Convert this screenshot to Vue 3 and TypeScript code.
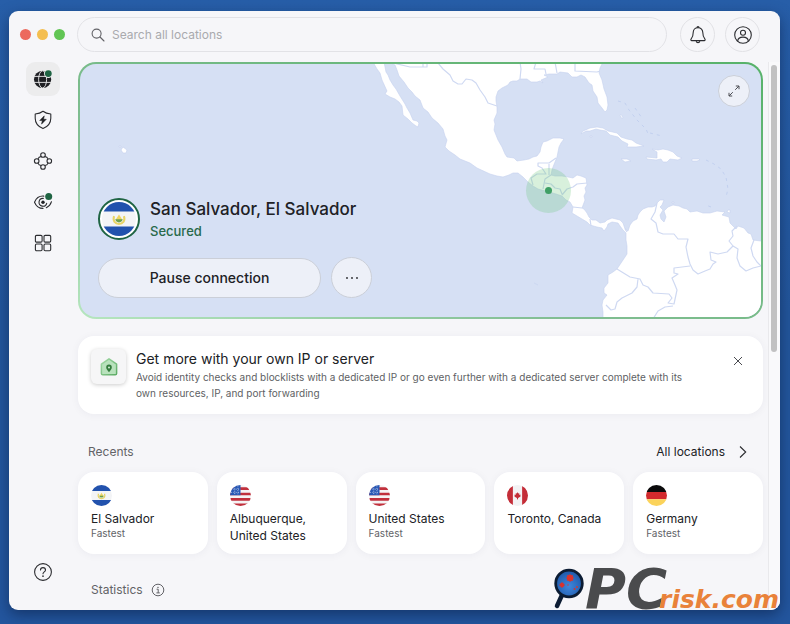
<script setup lang="ts">
import { ref } from 'vue'

type FlagCode = 'sv' | 'us' | 'ca' | 'de'

interface RecentLocation {
  flag: FlagCode
  name: string
  detail?: string
}

const query = ref('')
const promoVisible = ref(true)

const recents: RecentLocation[] = [
  { flag: 'sv', name: 'El Salvador', detail: 'Fastest' },
  { flag: 'us', name: 'Albuquerque, United States' },
  { flag: 'us', name: 'United States', detail: 'Fastest' },
  { flag: 'ca', name: 'Toronto, Canada' },
  { flag: 'de', name: 'Germany', detail: 'Fastest' },
]
</script>

<template>
  <div class="desktop">
    <div class="window">
      <header class="topbar">
        <div class="lights">
          <button class="light close" aria-label="Close window"></button>
          <button class="light minimise" aria-label="Minimise window"></button>
          <button class="light maximise" aria-label="Maximise window"></button>
        </div>
        <label class="search">
          <svg viewBox="0 0 14 14" width="14" height="14" fill="none" stroke="#626267" stroke-width="1.1" stroke-linecap="round">
            <circle cx="5.6" cy="5.6" r="4.5" />
            <path d="M9 9l4 4" />
          </svg>
          <input v-model="query" type="text" placeholder="Search all locations" aria-label="Search all locations" />
        </label>
        <button class="round" aria-label="Notifications">
          <svg viewBox="0 0 18 20" width="18" height="20" fill="none" stroke="#2b2c30" stroke-width="1.1" stroke-linejoin="round">
            <path d="M9 2.6C6 2.6 4.2 4.8 4.2 7.6c0 3.6-.8 5-2 6.3-.7.8-.3 1.7.6 1.7h12.4c.9 0 1.3-.9.6-1.7-1.2-1.3-2-2.7-2-6.3C13.8 4.8 12 2.6 9 2.6z" />
            <path d="M8 2.5a1 1 0 0 1 2 0M7.2 16.2c.3 1.9 3.3 1.9 3.6 0" />
          </svg>
        </button>
        <button class="round" aria-label="Account">
          <svg viewBox="0 0 20 20" width="20" height="20" fill="none" stroke="#2b2c30" stroke-width="1.1">
            <circle cx="10" cy="10" r="8.3" />
            <circle cx="10" cy="7.8" r="2.5" />
            <path d="M4.7 16.2c.2-5.4 10.4-5.4 10.6 0" />
          </svg>
        </button>
      </header>

      <div class="body">
        <nav class="sidebar">
          <button class="nav active" aria-label="VPN">
            <svg viewBox="0 0 20 20" width="20" height="20">
              <circle cx="9.6" cy="10.4" r="8.6" fill="#1f2024" />
              <g fill="none" stroke="#ececed" stroke-width=".9">
                <ellipse cx="9.6" cy="10.4" rx="4" ry="8.6" />
                <path d="M1 7.4h17.4M1 13.4h17.4" />
              </g>
              <circle cx="15.3" cy="4.6" r="4.3" fill="#ececed" />
              <circle cx="15.3" cy="4.6" r="3.4" fill="#1f6443" />
            </svg>
          </button>
          <button class="nav" aria-label="Threat protection">
            <svg viewBox="0 0 20 20" width="20" height="20">
              <path d="M10 1.3C7.8 3 5 3.8 2.2 4v4.2c0 4.9 2.9 8.3 7.8 10.4 4.9-2.1 7.8-5.5 7.8-10.4V4C15 3.8 12.2 3 10 1.3z" fill="none" stroke="#2b2c30" stroke-width="1.1" stroke-linejoin="round" />
              <path d="M11.3 5.8L6.7 10.5h2.6l-.8 3.7 4.8-4.9h-2.7z" fill="#1f2024" stroke="#1f2024" stroke-width=".5" stroke-linejoin="round" />
            </svg>
          </button>
          <button class="nav" aria-label="Meshnet">
            <svg viewBox="0 0 20 20" width="20" height="20" fill="none" stroke="#2b2c30" stroke-width="1.1">
              <circle cx="10" cy="4" r="2.3" />
              <circle cx="10" cy="16" r="2.3" />
              <circle cx="3.7" cy="10" r="2.3" />
              <circle cx="16.3" cy="10" r="2.3" />
              <path d="M8.2 5.5C6.5 5.7 5.5 6.5 5 7.9M11.8 5.5c1.7.2 2.7 1 3.2 2.4M5 12.1c.5 1.4 1.5 2.2 3.2 2.4M15 12.1c-.5 1.4-1.5 2.2-3.2 2.4" />
            </svg>
          </button>
          <button class="nav" aria-label="Dark web monitor">
            <svg viewBox="0 0 20 20" width="20" height="20" fill="none" stroke="#2b2c30" stroke-width="1.1" stroke-linecap="round">
              <path d="M10.8 4.1C6 3.7 2.9 6.8 1.5 10.2c1.5 3.6 4.8 6.2 8.5 6.2M18.5 9.7c-.9 2.9-2.7 5-5.2 6.1" />
              <path d="M10.3 6.4a3.9 3.9 0 1 0 3.4 4.9" />
              <circle cx="10" cy="10.3" r="1.7" fill="#1f2024" stroke="none" />
              <circle cx="15.7" cy="4.6" r="3.5" fill="#1f6443" stroke="none" />
            </svg>
          </button>
          <button class="nav" aria-label="All products">
            <svg viewBox="0 0 20 20" width="20" height="20" fill="none" stroke="#2b2c30" stroke-width="1.1">
              <rect x="2.4" y="2.4" width="6.7" height="6.7" rx="1.2" />
              <rect x="11" y="2.4" width="6.7" height="6.7" rx="1.2" />
              <rect x="2.4" y="11" width="6.7" height="6.7" rx="1.2" />
              <rect x="11" y="11" width="6.7" height="6.7" rx="1.2" />
            </svg>
          </button>
          <button class="nav help" aria-label="Help">
            <svg viewBox="0 0 20 20" width="20" height="20" fill="none" stroke="#2b2c30" stroke-width="1.1" stroke-linecap="round">
              <circle cx="10" cy="10" r="8.4" />
              <path d="M7.5 8c0-3.2 5-3.2 5 0 0 1.8-2.5 1.9-2.5 3.7" />
              <circle cx="10" cy="14.2" r=".3" fill="#2b2c30" />
            </svg>
          </button>
        </nav>

        <main class="main">
          <section class="map-card">
            <div class="map-inner">
              <svg class="map" viewBox="80 64 681 253" preserveAspectRatio="xMaxYMin slice" aria-hidden="true">
                <g fill="#fff" stroke="#c6d2ef" stroke-width=".6" stroke-linejoin="round">
                  <path
                    d="M373 62L377 69 380 73 382 80 387 91 385 94 390 97 395 99 399 102 402 106 403 115 408 119 412 123 416 126 418 127 419 123 417 121 413 120 410 113 407 108 405 104 400 96 396 89 393 85 390 80 388 75 386 72 384 62z"
                  />
                  <path
                    d="M389 62L395 65 397 70 399 76 404 82 408 88 412 92 415 96 420 100 423 108 428 112 432 118 438 123 443 129 445 136 447 140 445 147 449 151 455 155 460 159 465 161 470 163 477 168 490 174 497 176 503 177 509 175 513 173 518 173 523 177 528 182 533 186 538 189 549 192 556 194 562 196 566 200 570 202 573 207 572 213 577 216 582 219 587 222 590 225 597 227 602 228 604 231 607 227 608 224 612 222 618 223 620 226 623 230 626 233 626 240 627 246 627 254 623 260 617 269 613 272 608 275 608 283 604 288 604 293 607 295 603 300 602 305 603 312 603 320H764V241H761L753 240 751 234 748 233 744 228 738 226 736 229 730 223 729 217 722 215 725 212 717 211 710 213 703 213 697 211 690 212 687 209 683 208 679 206 673 205 668 207 664 211 666 217 664 222 661 219 660 215 663 210 660 207 662 205 664 200 660 200 657 203 655 206 652 207 648 207 643 209 640 212 638 215 637 219 633 221 630 225 628 231 625 229 623 223 620 220 612 218 607 220 605 222 600 223 596 220 592 220 589 217 587 213 584 209 582 208 585 200 584 196 586 192 585 188 587 185 586 178 581 176 577 175 573 178 568 177 562 176 555 176 551 175 552 170 553 167 555 162 557 157 558 152 559 147 561 143 564 139 560 138 553 138 547 141 543 142 541 147 540 152 537 156 533 157 529 159 524 160 517 161 514 158 507 157 505 154 502 147 498 140 496 135 494 130 495 124 494 120 497 113 497 107 496 101 496 97 498 91 502 88 508 85 510 82 513 81 517 81 520 79 527 79 531 82 537 82 540 81 543 83 541 80 548 77 544 75 549 74 557 74 560 72 568 73 572 77 577 77 581 75 585 77 589 83 592 85 593 91 597 97 598 103 602 108 605 112 607 110 608 105 607 97 604 89 602 80 599 73 600 68 603 62z"
                  />
                  <path
                    d="M581 134L583 131 590 128 597 127 603 128 608 131 617 133 621 137 627 139 632 140 636 143 644 146 636 147 627 147 628 144 622 141 618 137 610 135 606 131 600 130 596 129 590 131 586 131z"
                  />
                  <path
                    d="M652 149L658 150 663 149 668 150 673 152 677 156 682 158 678 160 670 159 667 162 663 162 661 159 656 160 647 159 646 157 657 158 657 155 657 152z"
                  />
                  <path d="M621 159L627 159 631 161 625 162zM692 159H699L700 160 697 161H692zM621 114L623 118 622 119 620 115zM728 210H730V213L727 212zM672 202H674V203H672zM590 136H592V137H590zM123 147L127 150 126 153 123 153 121 150zM119 146H121V147H119zM534 283L538 285" />
                </g>
                <g fill="none" stroke="#cfd9f2" stroke-width="1.2" stroke-linejoin="round">
                  <path d="M393 63L410 67H427V62M438 63L443 69 450 75 453 81 458 84 462 84 466 79 472 80 476 83 480 90 485 97 488 103 494 105 497 106M520 62L521 69 520 79M536 62L534 69H545L546 74M555 62L557 73M575 62V71L597 72 600 71M423 64V67" />
                  <path d="M533 185L531 178 537 174H546L542 168 538 166V163H549L556 158M549 164V175M551 175L545 179 543 189M545 183L551 184 555 188 560 189 562 194M562 195L567 189 573 187 577 184 587 183M573 207L582 208M590 219L591 226M625 229L627 232" />
                  <path d="M657 203L655 212 651 219 656 223 658 232 663 234 674 234 678 239 688 239 686 247 688 257 690 264 693 270 698 274 705 271 710 269 713 264 716 262 711 260 710 252 718 254 727 252 733 246 729 241 733 236 732 231 737 226M733 246L738 249 737 258 740 266 746 271 753 268 761 266M754 240L751 248 753 256 757 262 761 266M690 266L674 268 674 273 678 274 672 278 675 285 677 290 674 304 668 303 672 298 669 294 653 293 648 287 643 285 640 279 630 277 617 269M638 279L637 287 632 293 622 298 617 302 615 309 611 310 606 305M673 306L665 307 658 311 653 319" />
                </g>
                <g stroke="#bccbed" stroke-width=".8" fill="none" stroke-dasharray="3 4">
                  <path d="M618 101L625 103 629 110 637 120 646 129 649 136M635 108L642 118M706 160L714 164 721 169 726 177 728 189 726 197M650 133L662 136M711 207L706 205" />
                </g>
                <circle cx="548.5" cy="190.5" r="22.5" fill="#62c373" fill-opacity=".25" />
                <circle cx="548.5" cy="190.5" r="3.5" fill="#3f9f65" />
              </svg>
              <button class="expand" aria-label="Expand map">
                <svg viewBox="0 0 14 14" width="14" height="14" fill="none" stroke="#4c4e55" stroke-width="1">
                  <path d="M8.2 5.8L12 2M8.8 2H12v3.2M5.8 8.2L2 12M2 8.8V12h3.2" />
                </svg>
              </button>
              <div class="connection">
                <div class="status">
                  <span class="flag-ring">
                    <svg viewBox="0 0 20 20" width="34" height="34" aria-label="El Salvador">
                      <use href="#flag-sv" />
                    </svg>
                  </span>
                  <div>
                    <h1>San Salvador, El Salvador</h1>
                    <p class="secured">Secured</p>
                  </div>
                </div>
                <div class="actions">
                  <button class="pause">Pause connection</button>
                  <button class="more" aria-label="More options">
                    <svg viewBox="0 0 14 4" width="14" height="4" fill="#26272b">
                      <circle cx="2" cy="2" r=".9" />
                      <circle cx="7" cy="2" r=".9" />
                      <circle cx="12" cy="2" r=".9" />
                    </svg>
                  </button>
                </div>
              </div>
            </div>
          </section>

          <section v-if="promoVisible" class="promo">
            <span class="promo-icon">
              <svg viewBox="0 0 20 20" width="20" height="20">
                <defs>
                  <linearGradient id="house" x1="0" y1="0" x2="1" y2="1">
                    <stop offset="0" stop-color="#a5dca9" />
                    <stop offset="1" stop-color="#5cab64" />
                  </linearGradient>
                </defs>
                <path d="M10 1.8l7.6 5.4v9.2q0 1.4-1.4 1.4H3.8q-1.4 0-1.4-1.4V7.2z" fill="#b9e2bd" stroke="url(#house)" stroke-width="1.5" stroke-linejoin="round" />
                <path d="M10 15.2C8.2 12.9 7.2 11.8 7.2 10.4a2.8 2.8 0 0 1 5.6 0c0 1.4-1 2.5-2.8 4.8z" fill="#347c3d" />
                <circle cx="10" cy="10.4" r="1" fill="#d6f0d8" />
              </svg>
            </span>
            <div class="promo-text">
              <h2>Get more with your own IP or server</h2>
              <p>Avoid identity checks and blocklists with a dedicated IP or go even further with a dedicated server complete with its own resources, IP, and port forwarding</p>
            </div>
            <button class="dismiss" aria-label="Dismiss" @click="promoVisible = false">
              <svg viewBox="0 0 10 10" width="10" height="10" stroke="#4a4b50" stroke-width="1">
                <path d="M1 1l8 8M9 1L1 9" />
              </svg>
            </button>
          </section>

          <div class="section-head">
            <h3>Recents</h3>
            <a href="#locations">
              All locations
              <svg viewBox="0 0 8 14" width="8" height="14" fill="none" stroke="#2b2c30" stroke-width="1.1">
                <path d="M1 1.5L6.7 7 1 12.5" />
              </svg>
            </a>
          </div>

          <div class="recents">
            <button v-for="(item, index) in recents" :key="index" class="recent">
              <svg viewBox="0 0 20 20" width="21" height="21" aria-hidden="true">
                <use :href="'#flag-' + item.flag" />
              </svg>
              <span class="name">{{ item.name }}</span>
              <span v-if="item.detail" class="detail">{{ item.detail }}</span>
            </button>
          </div>

          <div class="stats-head">
            <h3>Statistics</h3>
            <button aria-label="About statistics">
              <svg viewBox="0 0 14 14" width="14" height="14" fill="none" stroke="#626267" stroke-width="1">
                <circle cx="7" cy="7" r="5.8" />
                <path d="M5.6 6.2H7.2V9.8M5.4 9.9h3.4" />
                <circle cx="7" cy="4.3" r=".3" fill="#626267" />
              </svg>
            </button>
          </div>
        </main>

        <div class="scrollbar"><div class="thumb"></div></div>
      </div>
    </div>

    <div class="watermark">
      <svg viewBox="0 0 32 42" width="32" height="42" aria-hidden="true">
        <defs>
          <radialGradient id="lens" cx=".5" cy=".6" r=".6">
            <stop offset="0" stop-color="#3f86dc" />
            <stop offset="1" stop-color="#1c57a8" />
          </radialGradient>
        </defs>
        <path d="M9 27L4 38" stroke="#0c1c33" stroke-width="4.5" stroke-linecap="round" />
        <circle cx="16" cy="15.5" r="13.3" fill="url(#lens)" stroke="#0c1c33" stroke-width="2.8" />
        <g fill="#d9332e">
          <circle cx="17" cy="10" r="3.2" />
          <circle cx="9" cy="17" r="2.2" />
          <circle cx="21.5" cy="21" r=".9" />
          <circle cx="24" cy="19" r=".9" />
          <circle cx="15" cy="17" r=".7" />
        </g>
        <path d="M17 6v8M13 10h8M14.2 7.2l5.6 5.6M19.8 7.2l-5.6 5.6M9 14v6M6 17h6" stroke="#d9332e" stroke-width=".8" />
      </svg>
      <span class="mark-main">PC</span><span class="mark-sub">risk.com</span>
    </div>

    <svg class="flag-defs" width="0" height="0" aria-hidden="true">
      <defs>
        <clipPath id="disc"><circle cx="10" cy="10" r="10" /></clipPath>
        <g id="flag-sv" clip-path="url(#disc)">
          <path d="M0 0h20v20H0z" fill="#f3f4f6" />
          <path d="M0 0h20v5.6H0zM0 14.4h20V20H0z" fill="#2252ad" />
          <path d="M7.1 8.3c-1 3 .8 4.6 2.9 4.6s3.9-1.6 2.9-4.6" fill="none" stroke="#e8d465" stroke-width="1.2" />
          <path d="M10 7.3l2 3.2H8z" fill="#f0d562" />
          <path d="M7.8 10.2h4.4q-.4 1.8-2.2 1.8t-2.2-1.8z" fill="#6da04c" />
        </g>
        <g id="flag-us" clip-path="url(#disc)">
          <path d="M0 0h20v20H0z" fill="#f5f3f4" />
          <path d="M0 2.2h20v2.6H0zM0 7.3h20v2.5H0zM0 12.4h20v2.5H0zM0 17.5h20V20H0z" fill="#c1303c" />
          <path d="M0 0h10v9.8H0z" fill="#2858b5" />
          <path d="M4.5 1v8M7.5 .5v9M1 4h9M1 7h9" stroke="#b9cbea" stroke-width=".8" stroke-dasharray="1 1.2" />
        </g>
        <g id="flag-ca" clip-path="url(#disc)">
          <path d="M0 0h20v20H0z" fill="#f3f2f4" />
          <path d="M0 0h5.6v20H0zM14.4 0H20v20h-5.6z" fill="#c42d38" />
          <path d="M10 6.8l.9 1.4.8-.3-.1 1.5 1.5-.2-.5 1.2.4.6-2.4 1.4-.3 1.3h-.6l-.3-1.3-2.4-1.4.4-.6-.5-1.2 1.5.2-.1-1.5.8.3z" fill="#c42d38" />
        </g>
        <g id="flag-de" clip-path="url(#disc)">
          <path d="M0 0h20v6.6H0z" fill="#0b0b0c" />
          <path d="M0 6.6h20v7H0z" fill="#d22a2d" />
          <path d="M0 13.6h20V20H0z" fill="#fbd35b" />
        </g>
      </defs>
    </svg>
  </div>
</template>

<style>
body {
  margin: 0;
}
</style>

<style scoped>
* {
  box-sizing: border-box;
}

.desktop {
  position: relative;
  display: flex;
  min-height: 100vh;
  padding: 11px 10px 14px 9px;
  background: linear-gradient(180deg, #275ea8 0%, #23569b 50%, #23569e 100%);
  font-family: Inter, "Liberation Sans", sans-serif;
  color: #202125;
}

.window {
  flex: 1;
  min-width: 0;
  display: flex;
  flex-direction: column;
  overflow: hidden;
  border-radius: 9px;
  background: #f6f6f9;
  box-shadow: 0 5px 14px rgba(8, 24, 60, 0.5);
}

button {
  display: flex;
  align-items: center;
  justify-content: center;
  flex: none;
  padding: 0;
  border: 0;
  background: none;
  font: inherit;
  color: inherit;
  text-align: left;
}

h1,
h2,
h3,
p {
  margin: 0;
}

svg {
  flex: none;
}

.topbar {
  display: flex;
  align-items: center;
  padding: 6px 20px 10px 11px;
}

.lights {
  display: flex;
  gap: 6px;
  margin-right: 12px;
}

.light {
  width: 11px;
  height: 11px;
  border-radius: 50%;
}

.close {
  background: #ec6a5e;
}

.minimise {
  background: #f4be50;
}

.maximise {
  background: #61c554;
}

.search {
  flex: 1;
  display: flex;
  align-items: center;
  gap: 7px;
  height: 35px;
  margin-right: 13px;
  padding: 0 13px;
  border: 1px solid #e2e2e6;
  border-radius: 18px;
}

.search input {
  flex: 1;
  min-width: 0;
  padding: 0;
  border: 0;
  outline: 0;
  background: none;
  font: 400 12px/16px Inter, "Liberation Sans", sans-serif;
  color: #202125;
}

.search input::placeholder {
  color: #a9aaae;
  opacity: 1;
}

.round {
  width: 35px;
  height: 35px;
  border: 1px solid #e2e2e6;
  border-radius: 50%;
}

.round + .round {
  margin-left: 10px;
}

.body {
  flex: 1;
  display: grid;
  grid-template-columns: 69px minmax(0, 1fr) 17px;
}

.sidebar {
  display: flex;
  flex-direction: column;
  gap: 7px;
  padding: 0 18px 21px 17px;
}

.nav {
  width: 34px;
  height: 34px;
  border-radius: 9px;
}

.active {
  background: #ececed;
}

.help {
  margin-top: auto;
}

.map-card {
  padding: 2px;
  border-radius: 18px;
  background: linear-gradient(to top right, #b6e6bf 0%, #82be93 35%, #57b269 100%);
}

.map-inner {
  position: relative;
  display: flex;
  align-items: flex-end;
  height: 253px;
  padding: 18px 18px 19px;
  overflow: hidden;
  border-radius: 16px;
  background: #d6e0f4;
}

.map {
  position: absolute;
  inset: 0;
  width: 100%;
  height: 100%;
}

.expand {
  position: absolute;
  top: 11px;
  right: 11px;
  width: 32px;
  height: 32px;
  border: 1px solid #cbcfd8;
  border-radius: 50%;
  background: #edf0f8;
}

.connection {
  position: relative;
}

.status {
  display: flex;
  align-items: center;
  gap: 10px;
  margin-bottom: 16px;
}

.flag-ring {
  display: flex;
  align-items: center;
  justify-content: center;
  width: 42px;
  height: 42px;
  border: 2px solid #1f6443;
  border-radius: 50%;
  background: #fff;
}

h1 {
  font-size: 17px;
  line-height: 24px;
  font-weight: 500;
}

.secured {
  font-size: 13px;
  line-height: 20px;
  font-weight: 500;
  color: #28694a;
}

.actions {
  display: flex;
  align-items: center;
  gap: 10px;
}

.pause {
  width: 223px;
  height: 40px;
  border: 1px solid #cbcfd8;
  border-radius: 20px;
  background: #edf0f8;
  font-size: 14px;
  font-weight: 500;
}

.more {
  width: 41px;
  height: 41px;
  border: 1px solid #cbcfd8;
  border-radius: 50%;
  background: #edf0f8;
}

.promo {
  display: flex;
  align-items: flex-start;
  gap: 10px;
  margin-top: 17px;
  padding: 12px 15px 13px 13px;
  border-radius: 16px;
  background: #fff;
  box-shadow: 0 1px 8px rgba(40, 40, 70, 0.05);
}

.promo-icon {
  display: flex;
  align-items: center;
  justify-content: center;
  flex: none;
  width: 35px;
  height: 35px;
  margin-top: 1px;
  border-radius: 6px;
  background: #f6f6f7;
  box-shadow: 0 1px 4px rgba(0, 0, 0, 0.2);
}

.promo-text {
  flex: 1;
}

h2 {
  font-size: 14px;
  line-height: 21px;
  font-weight: 400;
}

.promo-text p {
  max-width: 562px;
  font-size: 10px;
  line-height: 16px;
  color: #5e5f64;
}

.dismiss {
  width: 20px;
  height: 26px;
}

.section-head {
  display: flex;
  align-items: center;
  justify-content: space-between;
  margin-top: 28px;
  padding: 0 16px 0 10px;
}

h3 {
  font-size: 12px;
  line-height: 20px;
  font-weight: 400;
  color: #626367;
}

.section-head a {
  display: flex;
  align-items: center;
  gap: 14px;
  font-size: 12px;
  line-height: 20px;
  color: #202125;
  text-decoration: none;
}

.recents {
  display: grid;
  grid-template-columns: repeat(5, minmax(0, 1fr));
  gap: 9px;
  margin-top: 10px;
}

.recent {
  flex-direction: column;
  align-items: flex-start;
  justify-content: flex-start;
  min-height: 82px;
  padding: 13px 13px 10px;
  border-radius: 16px;
  background: #fff;
  box-shadow: 0 1px 8px rgba(40, 40, 70, 0.05);
}

.name {
  margin-top: 4px;
  font-size: 12px;
  line-height: 17px;
}

.detail {
  font-size: 10px;
  line-height: 13px;
  color: #626367;
}

.stats-head {
  display: flex;
  align-items: center;
  gap: 8px;
  margin-top: 26px;
  padding: 0 13px;
}

.scrollbar {
  margin-left: 5px;
  padding: 3px 3px 0 2px;
  border-left: 1px solid #e9e9ec;
  background: #f9f9fb;
}

.thumb {
  height: 287px;
  border-radius: 4px;
  background: #c1c1c2;
}

.watermark {
  position: absolute;
  right: 11px;
  bottom: 14px;
  display: flex;
  align-items: flex-end;
  font-family: "DejaVu Sans", sans-serif;
  font-weight: 700;
  font-style: oblique;
}

.mark-main {
  margin-right: -8px;
  font-size: 56px;
  line-height: 42px;
  color: #4a4b4d;
}

.mark-sub {
  font-size: 25px;
  line-height: 20px;
  color: #e9823a;
}

.flag-defs {
  position: absolute;
}
</style>
